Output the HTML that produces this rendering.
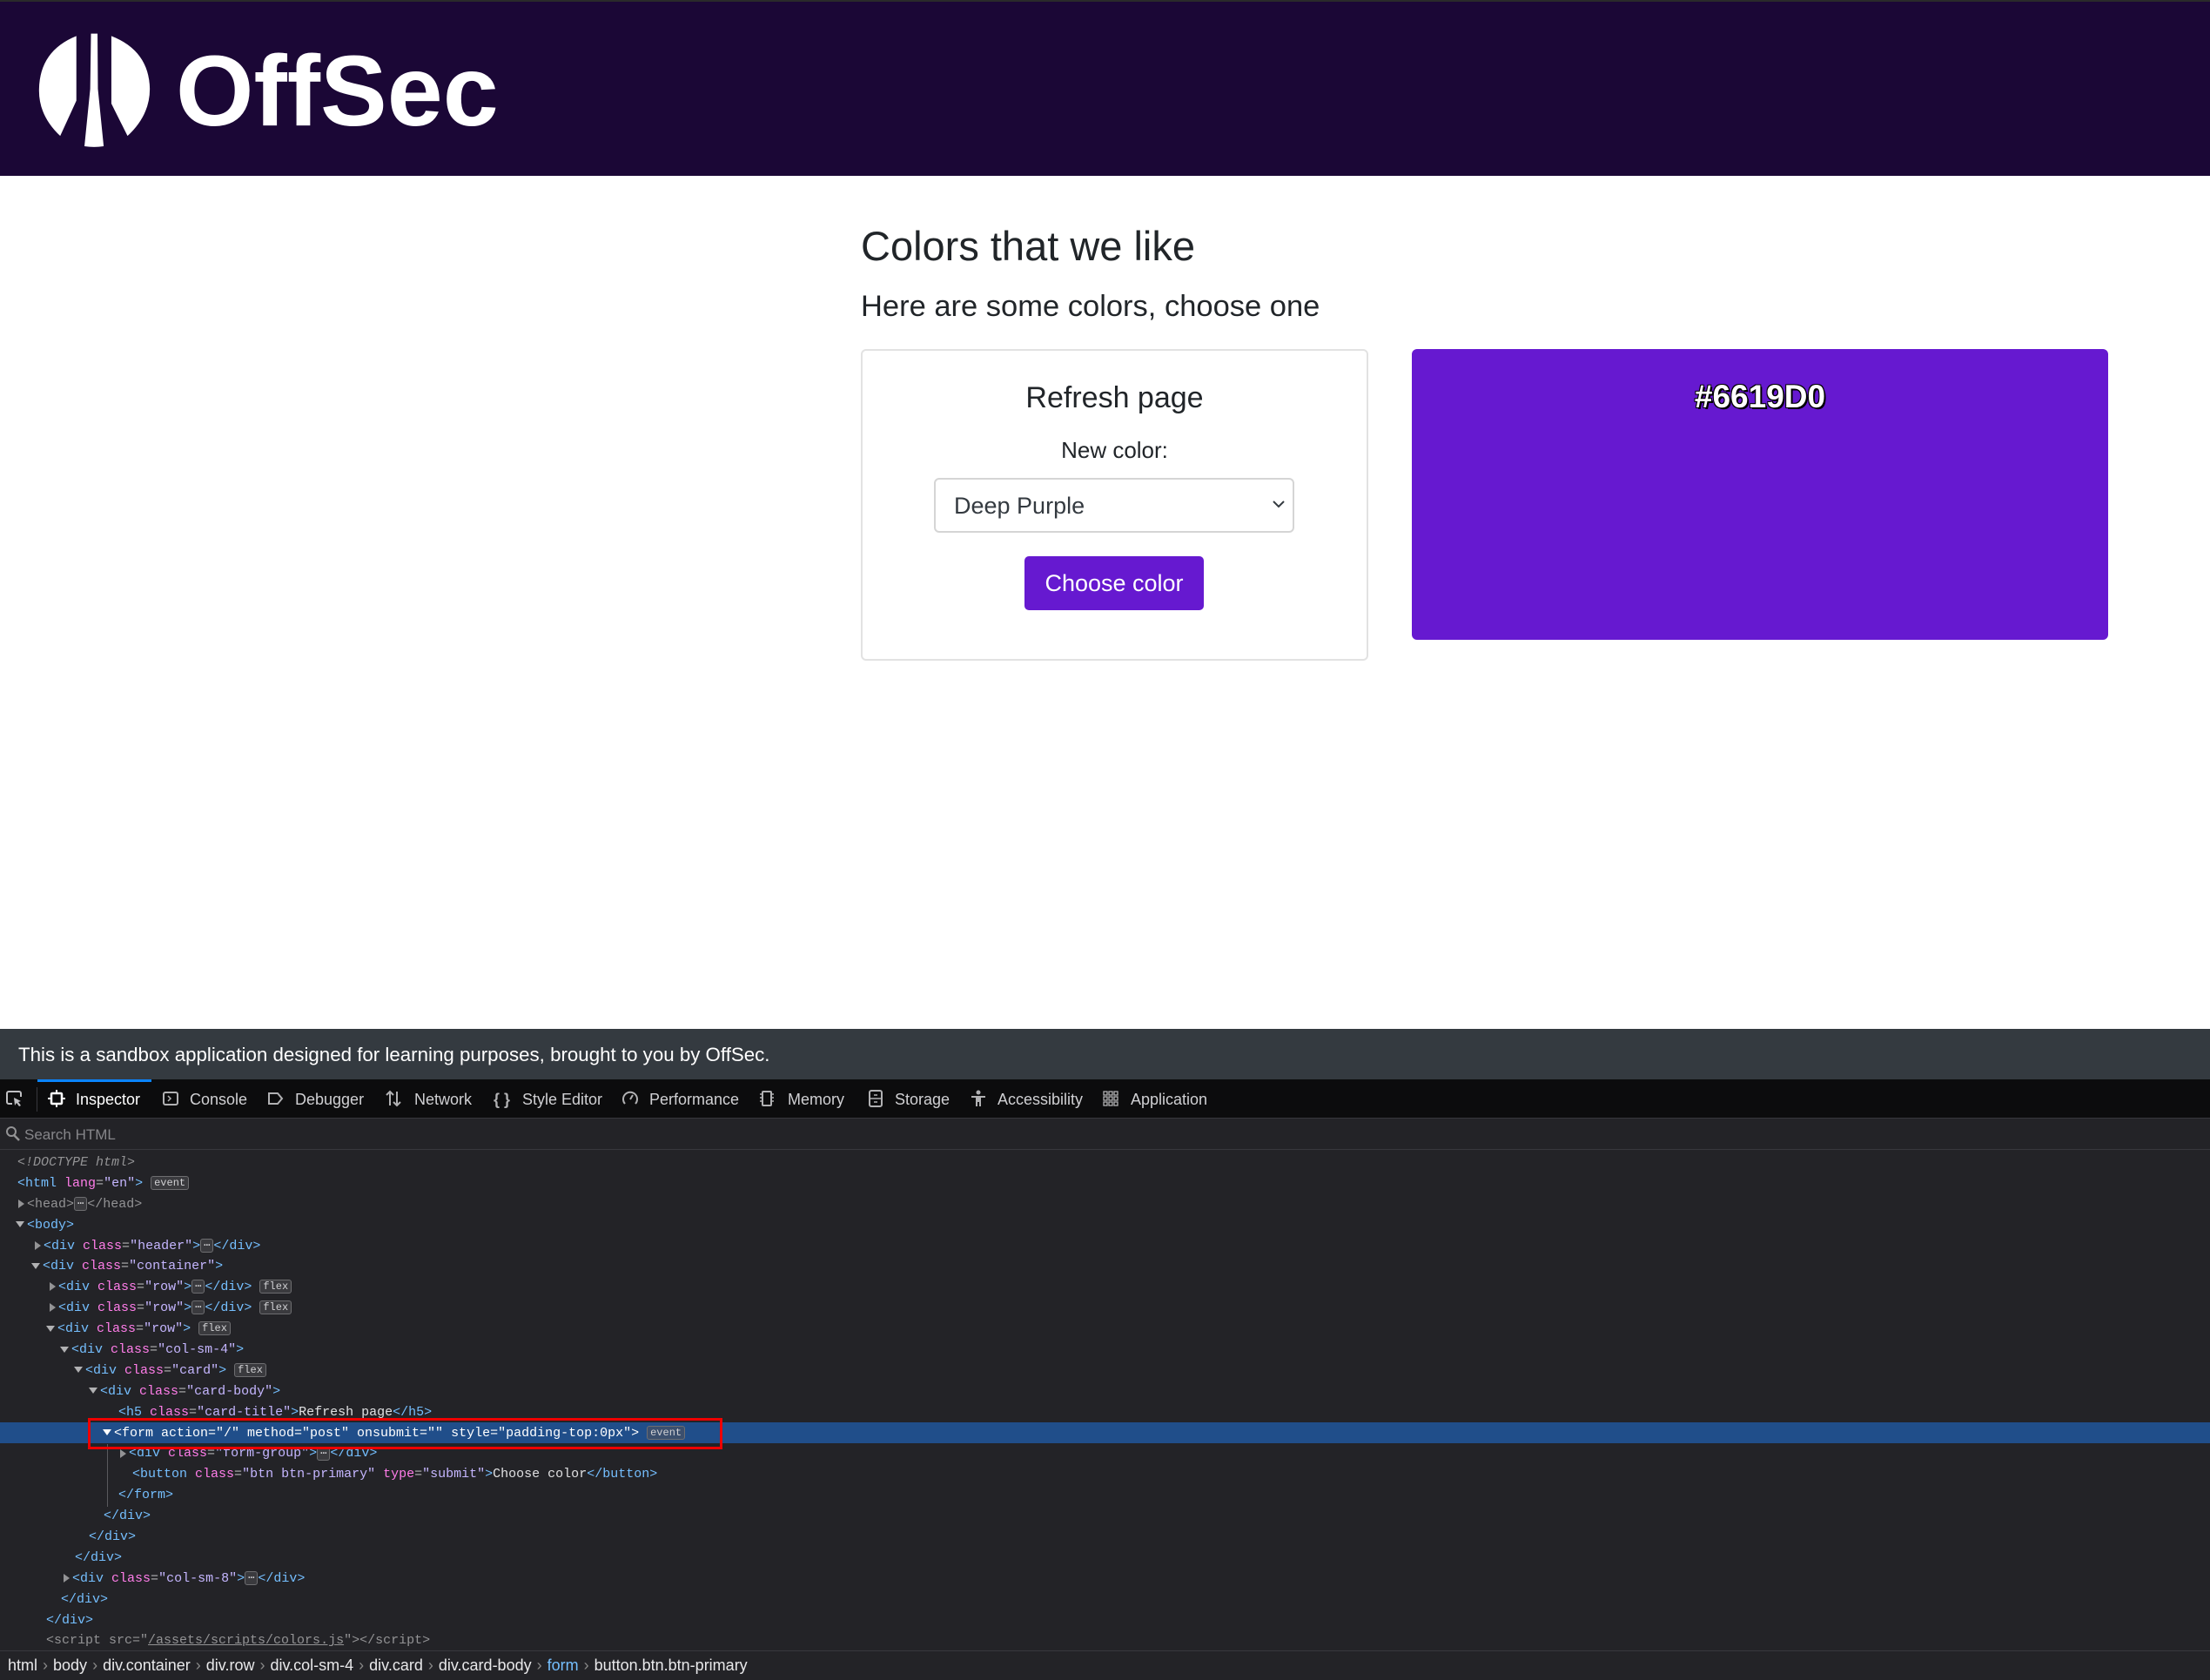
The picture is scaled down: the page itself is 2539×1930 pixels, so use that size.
<!DOCTYPE html>
<html><head><meta charset="utf-8"><style>
*{margin:0;padding:0;box-sizing:border-box}
body{width:2539px;height:1930px;position:relative;overflow:hidden;background:#fff;font-family:"Liberation Sans",sans-serif}
.a{position:absolute;white-space:nowrap}
#hdr{left:0;top:0;width:2539px;height:202px;background:#1b0736;border-top:2px solid #2a2a2a}
.tab{position:absolute;top:1251px;font-size:18px;color:#d0d0d3;line-height:24px}
.ic{position:absolute;top:1252px;width:20px;height:20px}
#tree{position:absolute;left:0;top:1324px;width:2539px;font-family:"Liberation Mono",monospace;font-size:15px;color:#b1b1b3}
.r{height:23.9px;line-height:23.9px;white-space:nowrap;position:relative}
.t{color:#75bfff}.n{color:#ff7de9}.v{color:#c5b6ff}.g{color:#939395}
.b{display:inline-block;border:1px solid #6d6d70;border-radius:3px;font-size:12px;line-height:14px;padding:0 3px;color:#d0d0d3;background:#3a3a3e;vertical-align:middle}
.tri{display:inline-block;width:0;height:0;border-style:solid;margin-right:3px;vertical-align:middle}
.tc{border-width:5px 0 5px 7px;border-color:transparent transparent transparent #939395}
.to{border-width:7px 5px 0 5px;border-color:#b1b1b3 transparent transparent transparent}
.s{color:#888;padding:0 6px}
</style></head><body>
<div id="hdr" class="a">
<svg class="a" style="left:44px;top:36px" width="129" height="131" viewBox="98 110 292 388" preserveAspectRatio="none">
<path d="M197 120 L197 340 L155 460 Q98 390 100 300 Q102 170 197 120Z" fill="#fff"/>
<path d="M288 120 L288 350 L330 460 Q388 390 388 300 Q386 170 288 120Z" fill="#fff"/>
<path d="M235 112 L252 112 L253 300 L268 495 Q243 500 218 495 L233 300Z" fill="#fff"/>
</svg>
<div class="a" style="left:202px;top:33px;font-size:115px;font-weight:bold;color:#fff;line-height:140px">OffSec</div>
</div>
<div class="a" style="left:989px;top:253px;font-size:47px;color:#212529;line-height:60px">Colors that we like</div>
<div class="a" style="left:989px;top:330px;font-size:34.5px;color:#212529;line-height:44px">Here are some colors, choose one</div>
<div class="a" style="left:989px;top:401px;width:583px;height:358px;border:2px solid #e2e2e2;border-radius:6px"></div>
<div class="a" style="left:989px;width:583px;top:435px;text-align:center;font-size:34px;color:#212529;line-height:44px">Refresh page</div>
<div class="a" style="left:989px;width:583px;top:500px;text-align:center;font-size:26px;color:#212529;line-height:34px">New color:</div>
<div class="a" style="left:1073px;top:549px;width:414px;height:63px;border:2px solid #d5d5d5;border-radius:6px"></div>
<div class="a" style="left:1096px;top:563px;font-size:27px;color:#343a40;line-height:36px">Deep Purple</div>
<svg class="a" style="left:1461px;top:573px" width="16" height="12" viewBox="0 0 16 12"><path d="M2 3 L8 9 L14 3" stroke="#343a40" stroke-width="2" fill="none"/></svg>
<div class="a" style="left:1177px;top:639px;width:206px;height:62px;background:#6619d0;border-radius:5px;color:#fff;font-size:27px;line-height:62px;text-align:center">Choose color</div>
<div class="a" style="left:1622px;top:401px;width:800px;height:334px;background:#6619d0;border-radius:6px"></div>
<div class="a" style="left:1622px;width:800px;top:434px;text-align:center;font-size:37px;font-weight:bold;color:#fff;line-height:44px;text-shadow:-1px -1px 0 #000,1px -1px 0 #000,-1px 1px 0 #000,1px 1px 0 #000,2px 2px 0 #000">#6619D0</div>

<div class="a" style="left:0;top:1182px;width:2539px;height:58px;background:#343a40"></div>
<div class="a" style="left:21px;top:1197px;font-size:22.3px;color:#fff;line-height:30px">This is a sandbox application designed for learning purposes, brought to you by OffSec.</div>
<div class="a" style="left:0;top:1240px;width:2539px;height:45px;background:#0c0c0d;border-bottom:1px solid #38383d"></div>
<div class="a" style="left:43px;top:1240px;width:131px;height:3px;background:#0a84ff"></div>
<div class="a" style="left:42px;top:1249px;width:1px;height:28px;background:#38383d"></div>
<svg class="ic" style="left:6px" viewBox="0 0 20 20"><path d="M8 16H4a2 2 0 0 1-2-2V4a2 2 0 0 1 2-2h12a2 2 0 0 1 2 2v4" stroke="#c0c0c3" stroke-width="2" fill="none"/><path d="M10 9l8 4-3 1 3 4-2 1-3-4-2 3z" fill="#c0c0c3"/></svg>
<svg class="ic" style="left:55px" viewBox="0 0 20 20"><rect x="4" y="4" width="12" height="12" rx="1" stroke="#fff" stroke-width="2.5" fill="none"/><path d="M10 0v4M10 16v4M0 10h4M16 10h4" stroke="#fff" stroke-width="2"/></svg>
<div class="tab" style="left:87px;color:#fff">Inspector</div>
<svg class="ic" style="left:186px" viewBox="0 0 20 20"><rect x="2" y="3" width="16" height="14" rx="2" stroke="#b1b1b3" stroke-width="2" fill="none"/><path d="M7 7l3 3-3 3" stroke="#b1b1b3" stroke-width="1.5" fill="none"/></svg>
<div class="tab" style="left:218px">Console</div>
<svg class="ic" style="left:306px" viewBox="0 0 20 20"><path d="M3 4h10l5 6-5 6H3z" stroke="#b1b1b3" stroke-width="2" fill="none"/></svg>
<div class="tab" style="left:339px">Debugger</div>
<svg class="ic" style="left:442px" viewBox="0 0 20 20"><path d="M6 18V2M2 6l4-4 4 4M14 2v16M10 14l4 4 4-4" stroke="#b1b1b3" stroke-width="2" fill="none"/></svg>
<div class="tab" style="left:476px">Network</div>
<div class="tab" style="left:567px;font-weight:bold;color:#b1b1b3">{ }</div>
<div class="tab" style="left:600px">Style Editor</div>
<svg class="ic" style="left:714px" viewBox="0 0 20 20"><path d="M4 16A8 8 0 1 1 16 16" stroke="#b1b1b3" stroke-width="2" fill="none"/><path d="M10 11l3-5" stroke="#b1b1b3" stroke-width="2"/></svg>
<div class="tab" style="left:746px">Performance</div>
<svg class="ic" style="left:871px" viewBox="0 0 20 20"><rect x="5" y="2" width="10" height="16" rx="1" stroke="#b1b1b3" stroke-width="2" fill="none"/><path d="M2 5h3M2 9h3M2 13h3M15 5h3M15 9h3M15 13h3" stroke="#b1b1b3" stroke-width="1.5"/></svg>
<div class="tab" style="left:905px">Memory</div>
<svg class="ic" style="left:996px" viewBox="0 0 20 20"><rect x="3" y="1" width="14" height="18" rx="2" stroke="#b1b1b3" stroke-width="2" fill="none"/><path d="M3 10h14M8 6h4M8 14h4" stroke="#b1b1b3" stroke-width="1.5"/></svg>
<div class="tab" style="left:1028px">Storage</div>
<svg class="ic" style="left:1114px" viewBox="0 0 20 20"><circle cx="10" cy="3" r="2.5" fill="#b1b1b3"/><path d="M2 7h16v2h-5v10h-2v-5h-2v5H7V9H2z" fill="#b1b1b3"/></svg>
<div class="tab" style="left:1146px">Accessibility</div>
<svg class="ic" style="left:1266px" viewBox="0 0 20 20"><g stroke="#b1b1b3" stroke-width="1.3" fill="none"><rect x="2" y="2" width="4" height="4"/><rect x="8" y="2" width="4" height="4"/><rect x="14" y="2" width="4" height="4"/><rect x="2" y="8" width="4" height="4"/><rect x="8" y="8" width="4" height="4"/><rect x="14" y="8" width="4" height="4"/><rect x="2" y="14" width="4" height="4"/><rect x="8" y="14" width="4" height="4"/><rect x="14" y="14" width="4" height="4"/></g></svg>
<div class="tab" style="left:1299px">Application</div>
<div class="a" style="left:0;top:1285px;width:2539px;height:36px;background:#232327;border-bottom:1px solid #38383d"></div>
<svg class="a" style="left:6px;top:1292px" width="18" height="20" viewBox="0 0 18 20"><circle cx="7" cy="8" r="5" stroke="#939395" stroke-width="2" fill="none"/><path d="M10 12l6 6" stroke="#939395" stroke-width="2.5"/></svg>
<div class="a" style="left:28px;top:1292px;font-size:17px;color:#86868a;line-height:24px">Search HTML</div>
<div class="a" style="left:0;top:1321px;width:2539px;height:575px;background:#232327"></div>
<div class="a" style="left:0;top:1634px;width:2539px;height:24px;background:#204e8a"></div>
<div class="a" style="left:123px;top:1659px;width:1px;height:72px;background:#5a5a5e"></div>
<div id="tree">
<div class="r" style="padding-left:20px"><i class="g">&lt;!DOCTYPE html&gt;</i></div>
<div class="r" style="padding-left:20px"><span class="t">&lt;html</span> <span class="n">lang</span>=<span class="v">"en"</span><span class="t">&gt;</span> <span class="b">event</span></div>
<div class="r" style="padding-left:21px"><span class="tri tc"></span><span class="g">&lt;head&gt;</span><span class="b">⋯</span><span class="g">&lt;/head&gt;</span></div>
<div class="r" style="padding-left:18px"><span class="tri to"></span><span class="t">&lt;body&gt;</span></div>
<div class="r" style="padding-left:40px"><span class="tri tc"></span><span class="t">&lt;div</span> <span class="n">class</span>=<span class="v">"header"</span><span class="t">&gt;</span><span class="b">⋯</span><span class="t">&lt;/div&gt;</span></div>
<div class="r" style="padding-left:36px"><span class="tri to"></span><span class="t">&lt;div</span> <span class="n">class</span>=<span class="v">"container"</span><span class="t">&gt;</span></div>
<div class="r" style="padding-left:57px"><span class="tri tc"></span><span class="t">&lt;div</span> <span class="n">class</span>=<span class="v">"row"</span><span class="t">&gt;</span><span class="b">⋯</span><span class="t">&lt;/div&gt;</span> <span class="b">flex</span></div>
<div class="r" style="padding-left:57px"><span class="tri tc"></span><span class="t">&lt;div</span> <span class="n">class</span>=<span class="v">"row"</span><span class="t">&gt;</span><span class="b">⋯</span><span class="t">&lt;/div&gt;</span> <span class="b">flex</span></div>
<div class="r" style="padding-left:53px"><span class="tri to"></span><span class="t">&lt;div</span> <span class="n">class</span>=<span class="v">"row"</span><span class="t">&gt;</span> <span class="b">flex</span></div>
<div class="r" style="padding-left:69px"><span class="tri to"></span><span class="t">&lt;div</span> <span class="n">class</span>=<span class="v">"col-sm-4"</span><span class="t">&gt;</span></div>
<div class="r" style="padding-left:85px"><span class="tri to"></span><span class="t">&lt;div</span> <span class="n">class</span>=<span class="v">"card"</span><span class="t">&gt;</span> <span class="b">flex</span></div>
<div class="r" style="padding-left:102px"><span class="tri to"></span><span class="t">&lt;div</span> <span class="n">class</span>=<span class="v">"card-body"</span><span class="t">&gt;</span></div>
<div class="r" style="padding-left:136px"><span class="t">&lt;h5</span> <span class="n">class</span>=<span class="v">"card-title"</span><span class="t">&gt;</span><span style="color:#e0e0e2">Refresh page</span><span class="t">&lt;/h5&gt;</span></div>
<div class="r" style="padding-left:118px;color:#fff"><span class="tri to" style="border-top-color:#fff"></span>&lt;form action="/" method="post" onsubmit="" style="padding-top:0px"&gt; <span class="b" style="background:#3b4f6e">event</span></div>
<div class="r" style="padding-left:138px"><span class="tri tc"></span><span class="t">&lt;div</span> <span class="n">class</span>=<span class="v">"form-group"</span><span class="t">&gt;</span><span class="b">⋯</span><span class="t">&lt;/div&gt;</span></div>
<div class="r" style="padding-left:152px"><span class="t">&lt;button</span> <span class="n">class</span>=<span class="v">"btn btn-primary"</span> <span class="n">type</span>=<span class="v">"submit"</span><span class="t">&gt;</span><span style="color:#e0e0e2">Choose color</span><span class="t">&lt;/button&gt;</span></div>
<div class="r" style="padding-left:136px"><span class="t">&lt;/form&gt;</span></div>
<div class="r" style="padding-left:119px"><span class="t">&lt;/div&gt;</span></div>
<div class="r" style="padding-left:102px"><span class="t">&lt;/div&gt;</span></div>
<div class="r" style="padding-left:86px"><span class="t">&lt;/div&gt;</span></div>
<div class="r" style="padding-left:73px"><span class="tri tc"></span><span class="t">&lt;div</span> <span class="n">class</span>=<span class="v">"col-sm-8"</span><span class="t">&gt;</span><span class="b">⋯</span><span class="t">&lt;/div&gt;</span></div>
<div class="r" style="padding-left:70px"><span class="t">&lt;/div&gt;</span></div>
<div class="r" style="padding-left:53px"><span class="t">&lt;/div&gt;</span></div>
<div class="r" style="padding-left:53px" ><span class="g">&lt;script src="<u>/assets/scripts/colors.js</u>"&gt;&lt;/script&gt;</span></div>
</div>
<div class="a" style="left:101px;top:1629px;width:729px;height:36px;border:3px solid #e00"></div>
<div class="a" style="left:0;top:1896px;width:2539px;height:34px;background:#232327;border-top:1px solid #38383d"></div>
<div class="a" style="left:9px;top:1901px;font-size:18px;color:#e8e8ea;line-height:24px">html<span class="s">›</span>body<span class="s">›</span>div.container<span class="s">›</span>div.row<span class="s">›</span>div.col-sm-4<span class="s">›</span>div.card<span class="s">›</span>div.card-body<span class="s">›</span><span style="color:#75bfff">form</span><span class="s">›</span>button.btn.btn-primary</div>
</body></html>
